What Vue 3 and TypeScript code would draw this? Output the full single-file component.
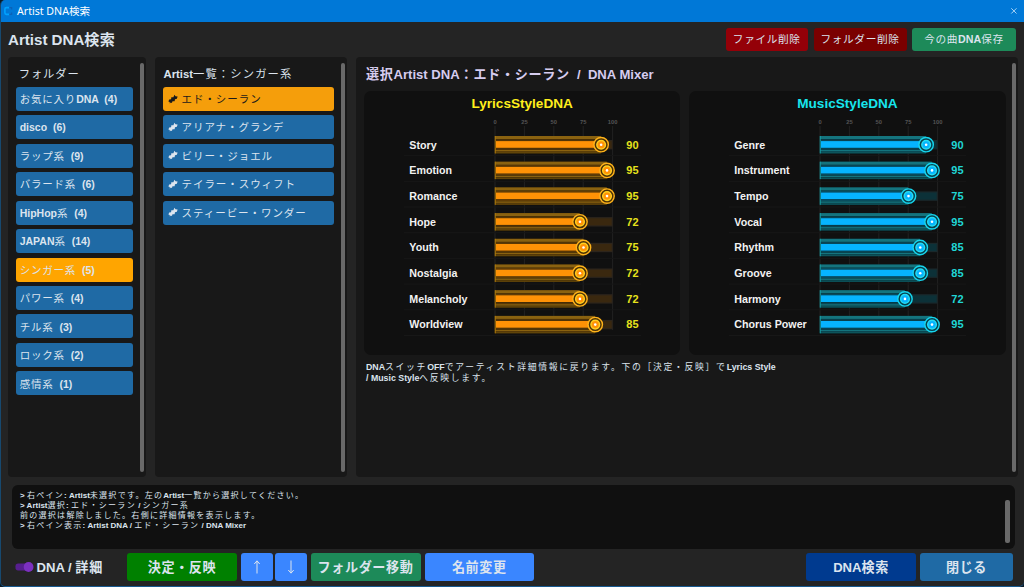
<script setup lang="ts">
import { h, type FunctionalComponent } from 'vue'

interface Folder { name: string; count: number }
interface Trait { label: string; value: number }
interface Deck { id: string; title: string; traits: Trait[] }

// Splits mixed text so Japanese runs can carry their own weight and tracking.
const Mixed: FunctionalComponent<{ text: string }> = (props) =>
  h(
    'span',
    { class: 'mixed' },
    props.text
      .split(/([\u3000-\u30ff\u4e00-\u9fff\uff00-\uffef]+)/)
      .filter((s) => s.length > 0)
      .map((s) => (/[\u3000-\u9fff\uff00-\uffef]/.test(s) ? h('span', { class: 'cj' }, s) : s)),
  )
Mixed.props = ['text']

const folders: Folder[] = [
  { name: 'お気に入りDNA', count: 4 },
  { name: 'disco', count: 6 },
  { name: 'ラップ系', count: 9 },
  { name: 'バラード系', count: 6 },
  { name: 'HipHop系', count: 4 },
  { name: 'JAPAN系', count: 14 },
  { name: 'シンガー系', count: 5 },
  { name: 'パワー系', count: 4 },
  { name: 'チル系', count: 3 },
  { name: 'ロック系', count: 2 },
  { name: '感情系', count: 1 },
]
const activeFolder = 'シンガー系'

const artists = ['エド・シーラン', 'アリアナ・グランデ', 'ビリー・ジョエル', 'テイラー・スウィフト', 'スティービー・ワンダー']
const activeArtist = 'エド・シーラン'

const decks: Deck[] = [
  {
    id: 'lyrics',
    title: 'LyricsStyleDNA',
    traits: [
      { label: 'Story', value: 90 },
      { label: 'Emotion', value: 95 },
      { label: 'Romance', value: 95 },
      { label: 'Hope', value: 72 },
      { label: 'Youth', value: 75 },
      { label: 'Nostalgia', value: 72 },
      { label: 'Melancholy', value: 72 },
      { label: 'Worldview', value: 85 },
    ],
  },
  {
    id: 'music',
    title: 'MusicStyleDNA',
    traits: [
      { label: 'Genre', value: 90 },
      { label: 'Instrument', value: 95 },
      { label: 'Tempo', value: 75 },
      { label: 'Vocal', value: 95 },
      { label: 'Rhythm', value: 85 },
      { label: 'Groove', value: 85 },
      { label: 'Harmony', value: 72 },
      { label: 'Chorus Power', value: 95 },
    ],
  },
]

const ticks = [0, 25, 50, 75, 100]
const x0 = 131
const scale = 1.176
const px = (v: number): number => x0 + v * scale
const rowY = (i: number): number => 32.7 + i * 25.7

const logs = [
  '> 右ペイン: Artist未選択です。左のArtist一覧から選択してください。',
  '> Artist選択: エド・シーラン / シンガー系',
  '前の選択は解除しました。右側に詳細情報を表示します。',
  '> 右ペイン表示: Artist DNA / エド・シーラン / DNA Mixer',
]
</script>

<template>
  <div class="window">
    <header class="titlebar">
      <svg class="logo" viewBox="0 0 10 10" width="10" height="10">
        <path d="M6.2 1.6H3.4Q1.9 1.6 1.9 3.2V6.8Q1.9 8.4 3.4 8.4H6.2" fill="none" stroke="#00a2ff" stroke-width="1.6" />
        <path d="M6.4 1.6H8.6V3.4M6.4 8.4H8.6V6.6" fill="none" stroke="#0a62b8" stroke-width="1.4" />
      </svg>
      <span class="caption">Artist DNA検索</span>
      <svg class="close" viewBox="0 0 8 8" width="8" height="8">
        <path d="M1.3 1.3L6.5 6.5M6.5 1.3L1.3 6.5" stroke="#b9dcf8" stroke-width="0.9" />
      </svg>
    </header>

    <div class="heading">
      <h1><Mixed text="Artist DNA検索" /></h1>
      <div class="tools">
        <button class="tool red"><Mixed text="ファイル削除" /></button>
        <button class="tool maroon"><Mixed text="フォルダー削除" /></button>
        <button class="tool green"><Mixed text="今の曲DNA保存" /></button>
      </div>
    </div>

    <main class="panes">
      <section class="pane folders">
        <div class="content">
          <h2><Mixed text="フォルダー" /></h2>
          <button v-for="f in folders" :key="f.name" class="row" :class="{ active: f.name === activeFolder }">
            <Mixed :text="`${f.name}  (${f.count})`" />
          </button>
        </div>
        <div class="bar"></div>
      </section>

      <section class="pane artists">
        <div class="content">
          <h2><Mixed text="Artist一覧：シンガー系" /></h2>
          <button v-for="a in artists" :key="a" class="row" :class="{ picked: a === activeArtist }">
            <svg class="helix" viewBox="0 0 10 10" width="10" height="10">
              <path d="M1.8 9.6L1.7 8.1L0.4 7.4L1.2 5.4L3.1 5.2L3.3 3.2L5.4 3.2L6.4 0.8L7.5 2.2L9.6 2.4L8.9 4.8L7 5.2L6.6 7.2L4.5 7.2L3.9 8.9L2.8 8.5Z" fill="currentColor" />
            </svg>
            <Mixed :text="a" />
          </button>
        </div>
        <div class="bar"></div>
      </section>

      <section class="pane detail">
        <div class="content">
          <h2><Mixed text="選択Artist DNA：エド・シーラン  /  DNA Mixer" /></h2>
          <div class="decks">
            <article v-for="d in decks" :key="d.id" class="deck" :class="d.id">
              <h3>{{ d.title }}</h3>
              <svg class="chart" viewBox="0 0 316 236" width="316" height="236">
                <g class="grid">
                  <line v-for="t in ticks" :key="t" :x1="px(t)" :x2="px(t)" y1="14" y2="218" />
                </g>
                <text v-for="t in ticks" :key="t" class="tick" :x="px(t)" y="11.5">{{ t }}</text>
                <g v-for="(t, i) in d.traits" :key="t.label" :transform="`translate(0 ${rowY(i)})`">
                  <line class="rule" x1="40" x2="277" y1="10.9" y2="10.9" />
                  <text class="label" x="45.3" y="3.8">{{ t.label }}</text>
                  <rect class="rest" :x="x0" y="-4.7" :width="100 * scale" height="9.4" />
                  <rect class="rest-in" :x="x0" y="-3.5" :width="100 * scale - 1" height="7" />
                  <rect class="shade" :x="x0" y="-8.7" :width="t.value * scale" height="17.4" />
                  <rect class="band" :x="x0" y="-8.7" :width="t.value * scale" height="3" />
                  <rect class="thin" :x="x0" y="-5" :width="t.value * scale" height="0.8" />
                  <rect class="core" :x="x0 + 1" y="-3.6" :width="t.value * scale - 1" height="6.7" />
                  <rect class="thin" :x="x0" y="3.9" :width="t.value * scale" height="0.8" />
                  <rect class="band" :x="x0" y="5.3" :width="t.value * scale" height="1.4" />
                  <rect class="band low" :x="x0" y="7.2" :width="t.value * scale" height="1.5" />
                  <rect class="edge" :x="x0 - 0.3" y="-8.7" width="1" height="17.4" />
                  <circle class="disc" :cx="px(t.value) + 0.3" cy="0" r="7.2" />
                  <circle class="hub" :cx="px(t.value) + 0.3" cy="0" r="4.3" />
                  <circle class="dot" :cx="px(t.value) + 0.3" cy="0" r="1.3" />
                  <text class="value" x="262.3" y="3.8">{{ t.value }}</text>
                </g>
              </svg>
            </article>
          </div>
          <p class="note">
            <Mixed text="DNAスイッチOFFでアーティスト詳細情報に戻ります。下の［決定・反映］でLyrics Style" /><br />
            <Mixed text="/ Music Styleへ反映します。" />
          </p>
        </div>
        <div class="bar"></div>
      </section>
    </main>

    <section class="log">
      <div class="lines">
        <div v-for="l in logs" :key="l"><Mixed :text="l" /></div>
      </div>
      <div class="bar"></div>
    </section>

    <footer class="actions">
      <svg class="switch" viewBox="0 0 20 12" width="20" height="12">
        <rect x="0.5" y="2.6" width="16" height="6.8" rx="2.6" fill="#571f8f" />
        <circle cx="13.6" cy="6" r="4.9" fill="#7c30c0" />
      </svg>
      <span class="switch-label"><Mixed text="DNA / 詳細" /></span>
      <button class="act apply"><Mixed text="決定・反映" /></button>
      <button class="act arrow">
        <svg viewBox="0 0 10 16" width="10" height="16"><path d="M5 14.5V2M2.3 5L5 1.8L7.7 5" /></svg>
      </button>
      <button class="act arrow down">
        <svg viewBox="0 0 10 16" width="10" height="16"><path d="M5 1.5V14M2.3 11L5 14.2L7.7 11" /></svg>
      </button>
      <button class="act move"><Mixed text="フォルダー移動" /></button>
      <button class="act rename"><Mixed text="名前変更" /></button>
      <span class="spacer"></span>
      <button class="act search"><Mixed text="DNA検索" /></button>
      <button class="act quit"><Mixed text="閉じる" /></button>
    </footer>
  </div>
</template>

<style>
body { margin: 0; background: #0b1a26; overflow: hidden; }
.mixed { white-space: pre; }
.cj { letter-spacing: var(--cj-ls, 0.06em); font-weight: var(--cj-w, 400); }
</style>

<style scoped>
.window {
  box-sizing: border-box;
  width: 1024px;
  height: 587px;
  background: #242424;
  border-left: 1px solid #17496f;
  border-bottom: 1px solid #17598f;
  border-radius: 5px 0 5px 5px;
  overflow: hidden;
  display: flex;
  flex-direction: column;
  font-family: "Liberation Sans", "Noto Sans CJK JP", sans-serif;
  font-weight: 700;
  color: #dce4ee;
}
button {
  box-sizing: border-box;
  border: 0;
  padding: 0;
  margin: 0;
  font: inherit;
  color: #dce4ee;
  display: flex;
  align-items: center;
  justify-content: center;
  border-radius: 3px;
}
h1, h2, h3, p { margin: 0; font-weight: 700; }

.titlebar {
  flex: none;
  box-sizing: border-box;
  height: 21.5px;
  background: #0078d7;
  display: flex;
  align-items: center;
  padding: 0 6px 0 3px;
  margin-left: -1px;
}
.caption {
  font: 400 10.6px/21px "Noto Sans", "Noto Sans CJK JP", sans-serif;
  color: #fff;
  margin-left: 4px;
  padding-top: 1.5px;
  flex: 1;
}

.heading {
  flex: none;
  height: 35.5px;
  display: flex;
  justify-content: space-between;
  padding: 0 8px 0 7px;
}
h1 { font-size: 15.1px; line-height: 35px; --cj-ls: 0.02em; --cj-w: 700; }
.tools { display: flex; gap: 5.5px; padding-top: 6.5px; }
.tool { height: 23px; font-size: 10.67px; padding-bottom: 2px; }
.red { width: 82.5px; background: #940008; }
.maroon { width: 93px; background: #7a0000; }
.green { width: 104px; background: #1d8a59; }

.panes { flex: none; height: 420px; display: flex; gap: 9px; padding: 0 6px 0 7px; }
.pane { background: #181818; border-radius: 4px; display: flex; justify-content: space-between; }
.bar { flex: none; width: 4.5px; background: #696969; border-radius: 2px; }
.pane > .bar { margin: 5.5px 2px 5px 0; }
.folders { width: 138px; }
.artists { width: 192px; }
.detail { flex: 1; }

.content { display: flex; flex-direction: column; }
h2 { font-size: 11.3px; line-height: 16px; padding: 8.8px 0 5px; --cj-ls: 0.1em; }
.folders .content { padding-left: 7.7px; }
.folders h2 { padding-left: 3px; --cj-ls: 0.08em; }
.artists .content { padding-left: 7.5px; }
.artists h2 { padding-left: 1px; }
.row {
  height: 24px;
  margin-bottom: 4.46px;
  background: #1f6aa5;
  justify-content: flex-start;
  font-size: 10.5px;
  padding-bottom: 0.6px;
  --cj-ls: 0.075em;
}
.folders .row { width: 117px; padding-left: 4px; }
.artists .row { width: 171.5px; padding-left: 5px; gap: 4px; --cj-ls: 0.09em; }
.row.active { background: #ffa500; }
.row.picked { background: #f59e0b; color: #1a1a1a; }

.detail .content { padding-left: 8px; }
.detail h2 { font-size: 13.1px; line-height: 18px; padding: 9px 0 7px 2px; color: #d6ccef; --cj-ls: 0.05em; --cj-w: 700; }
.decks { display: flex; gap: 9px; }
.deck { width: 316.3px; height: 264px; background: #101010; border-radius: 7px; }
h3 { font-size: 13.6px; line-height: 16px; padding-top: 5px; text-align: center; }
.chart { display: block; }
.grid line { stroke: #222; stroke-width: 1; }
.rule { stroke: #171717; stroke-width: 1; }
.tick { fill: #555; font-size: 5.8px; text-anchor: middle; }
.label { fill: #f2f2f2; font-size: 10.7px; }
.value { font-size: 11px; }
.dot { fill: #fff; }

.lyrics h3 { color: #ffee1c; }
.lyrics .value { fill: #e6e21c; }
.lyrics .rest { fill: #2d251c; }
.lyrics .rest-in { fill: #3a280f; }
.lyrics .shade { fill: #3c2807; }
.lyrics .band { fill: #8a6210; }
.lyrics .low { fill: #604409; }
.lyrics .thin { fill: #6b4306; }
.lyrics .core { fill: #ff9206; }
.lyrics .edge { fill: #b07b0b; }
.lyrics .disc { fill: #4b3206; stroke: #ffb31a; stroke-width: 1.4; }
.lyrics .hub { fill: #ff9206; stroke: #ffcf20; stroke-width: 1.5; }

.music h3 { color: #17e6ee; }
.music .value { fill: #20d6d6; }
.music .rest { fill: #1a292c; }
.music .rest-in { fill: #0c3138; }
.music .shade { fill: #06323c; }
.music .band { fill: #14747e; }
.music .low { fill: #0d535a; }
.music .thin { fill: #0a5568; }
.music .core { fill: #06b4ff; }
.music .edge { fill: #16a2a8; }
.music .disc { fill: #07404c; stroke: #16d6ee; stroke-width: 1.4; }
.music .hub { fill: #06b4ff; stroke: #26dcf2; stroke-width: 1.5; }

.note { font-size: 8.8px; line-height: 10.4px; padding: 7.2px 0 0 2px; --cj-ls: 0.195em; }

.log {
  flex: none;
  box-sizing: border-box;
  height: 63.5px;
  margin: 8px 9px 0 11px;
  padding: 6px 5.5px 6px 8px;
  background: #101010;
  border-radius: 6px;
  display: flex;
  justify-content: space-between;
  font-size: 8px;
  line-height: 10px;
  --cj-ls: 0.16em;
}
.lines { padding-top: 0.4px; }
.log > .bar { margin-top: 9px; }

.actions {
  flex: 1;
  display: flex;
  align-items: flex-start;
  padding: 4.5px 11px 0 14px;
  font-size: 13.1px;
  --cj-ls: 0.045em;
  --cj-w: 700;
}
.switch { margin-top: 8px; }
.switch-label { width: 90.5px; padding-left: 1.5px; line-height: 29px; --cj-ls: 0.06em; }
.act { height: 27.5px; margin-right: 4px; padding-bottom: 1.5px; }
.apply { width: 110px; background: #008000; }
.arrow { width: 31.5px; background: #3a86ff; margin-right: 2.5px; padding: 1px 0 0; }
.arrow.down { margin-right: 4px; }
.arrow path { fill: none; stroke: #dce4ee; stroke-width: 1; }
.move { width: 110px; background: #1d8a59; }
.rename { width: 109.5px; background: #3a86ff; }
.spacer { flex: 1; }
.search { width: 110px; background: #003a8f; }
.quit { width: 93px; background: #1f6aa5; margin-right: 0; }
</style>
